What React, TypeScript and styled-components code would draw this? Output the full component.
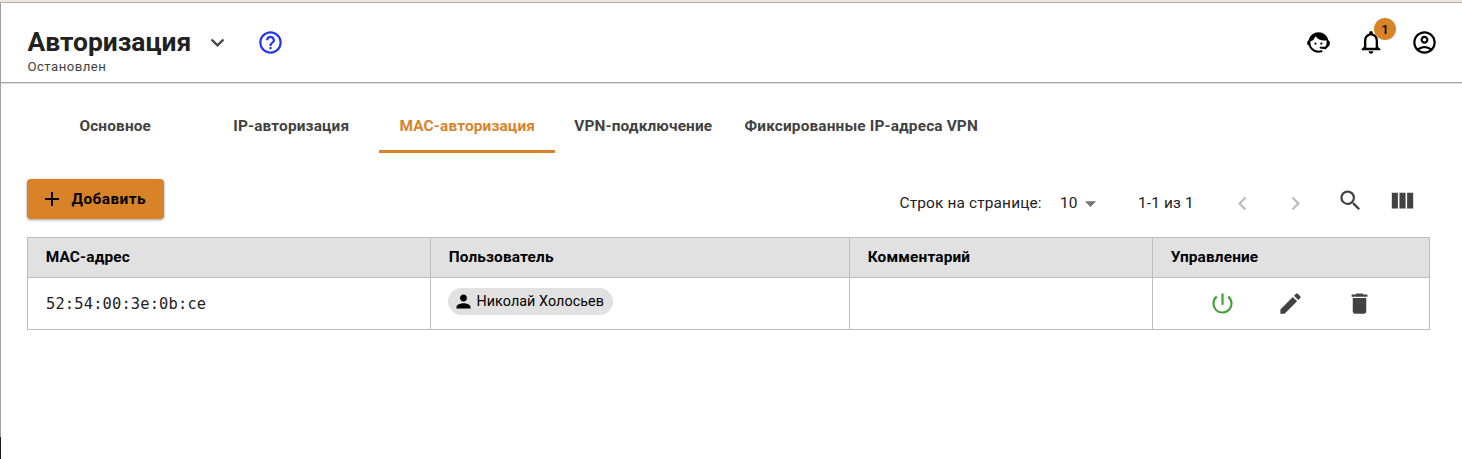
import React from "react";
import styled, { createGlobalStyle } from "styled-components";

const Global = createGlobalStyle`
  *, *::before, *::after { box-sizing: border-box; }
  body { margin: 0; background: #fff; font-family: Roboto, sans-serif; color: #212121; overflow: hidden; }
  button { font: inherit; border: 0; padding: 0; background: none; color: inherit; }
`;

const Page = styled.div`
  height: 459px;
  display: grid;
  grid-template-columns: 1px 1fr;
  grid-template-rows: 2px 1fr;
`;
const TopStrip = styled.div`
  grid-column: 1 / 3;
  background: #f3e2dc;
`;
const LeftEdge = styled.div`
  background: linear-gradient(#a3a3a3 435px, #1a1a1a 435px);
`;
const Main = styled.div`
  border-top: 1px solid #b9b0ad;
  min-width: 0;
`;

const Header = styled.header`
  height: 80px;
  display: flex;
  justify-content: space-between;
  border-bottom: 1px solid #a3a3a3;
  box-shadow: 0 1px 1px rgba(0, 0, 0, 0.12);
  padding: 0 24px 0 26px;
`;
const TitleArea = styled.div`
  display: flex;
`;
const TitleBlock = styled.div`
  padding: 23px 0 0 0.5px;
  width: 164px;
`;
const Title = styled.h1`
  margin: 0;
  font-size: 26.4px;
  line-height: 32px;
  font-weight: 700;
  white-space: nowrap;
`;
const Status = styled.div`
  margin-top: 1px;
  font-size: 13.2px;
  line-height: 16px;
  letter-spacing: 0.44px;
  color: #424242;
`;
const TitleIcons = styled.div`
  display: flex;
  align-items: flex-start;
  padding: 26px 0 0 13px;
  gap: 26px;
  color: #424242;
`;
const HeaderIcons = styled.div`
  display: flex;
  gap: 25px;
  padding-top: 26px;
  color: #000;
`;
const BellWrap = styled.div`
  position: relative;
  width: 28px;
  height: 28px;
  margin: -1px 1px 0 0;
`;
const Badge = styled.span`
  position: absolute;
  left: 17px;
  top: -10px;
  width: 22px;
  height: 22px;
  border-radius: 50%;
  background: #d98328;
  font-size: 13.2px;
  font-weight: 500;
  line-height: 23px;
  text-align: center;
`;

const Tabs = styled.nav`
  display: flex;
  padding: 17px 0 0 26px;
`;
const Tab = styled.button<{ $width: number; $active?: boolean }>`
  width: ${(p) => p.$width}px;
  height: 53px;
  padding: 2px 0 0 0.5px;
  border-bottom: 3px solid ${(p) => (p.$active ? "#d98328" : "transparent")};
  color: ${(p) => (p.$active ? "#d98328" : "#424242")};
  font-size: 15.4px;
  font-weight: 700;
  letter-spacing: 0.15px;
  white-space: nowrap;
`;

const Toolbar = styled.div`
  display: flex;
  justify-content: space-between;
  padding: 26px 46px 0 26px;
  height: 84px;
`;
const AddButton = styled.button`
  display: flex;
  align-items: center;
  width: 137px;
  height: 40px;
  padding-left: 13px;
  gap: 7.5px;
  border-radius: 4px;
  background: #d98328;
  color: #000;
  font-size: 15.4px;
  font-weight: 700;
  letter-spacing: 0.44px;
  box-shadow: 0 1px 3px rgba(0, 0, 0, 0.4);
`;
const Pager = styled.div`
  display: flex;
  font-size: 15.4px;
  letter-spacing: 0.16px;
  line-height: 20px;
`;
const PagerLabel = styled.span<{ $width: number }>`
  width: ${(p) => p.$width}px;
  padding-top: 14px;
  white-space: nowrap;
`;
const PagerIcon = styled.span<{ $width: number; $top: number; $color: string }>`
  width: ${(p) => p.$width}px;
  padding-top: ${(p) => p.$top}px;
  color: ${(p) => p.$color};
`;

const Table = styled.table`
  width: 1403px;
  margin-left: 26px;
  table-layout: fixed;
  border-collapse: collapse;
  font-size: 15.4px;
`;
const Th = styled.th<{ $width: number }>`
  width: ${(p) => p.$width}px;
  height: 40px;
  padding: 0 17px 2px 17.7px;
  text-align: left;
  background: #e1e1e1;
  border: 1px solid #bdbdbd;
  color: #000;
  font-weight: 700;
  letter-spacing: 0.15px;
`;
const Td = styled.td`
  height: 52px;
  padding: 0 17px 0 18px;
  border: 1px solid #bdbdbd;
`;
const Mac = styled.span`
  font-family: "DejaVu Sans Mono", monospace;
  font-size: 15.4px;
  letter-spacing: 0.16px;
`;
const Chip = styled.span`
  display: flex;
  align-items: center;
  width: 165px;
  height: 27px;
  margin: 0 0 4px -1px;
  padding: 0 0 2px 4.5px;
  gap: 3px;
  border-radius: 14px;
  background: #e1e1e1;
  color: #000;
  font-size: 14.3px;
  letter-spacing: 0.08px;
  white-space: nowrap;
  svg { margin-top: 2px; }
`;
const Actions = styled.div`
  display: flex;
  justify-content: center;
  gap: 41.3px;
  padding: 0 1.5px 0 0;
  color: #424242;
`;

type IconProps = { d: string; size?: number; color?: string };
const Svg = styled.svg`
  display: block;
  flex: none;
`;
const Icon = ({ d, size = 27, color = "currentColor" }: IconProps) => (
  <Svg width={size} height={size} viewBox="0 0 24 24" fill={color}>
    <path d={d} />
  </Svg>
);

const paths = {
  expand: "M7.41 8.59 12 13.17l4.59-4.58L18 10l-6 6-6-6z",
  help: "M11 18h2v-2h-2v2zm1-16C6.48 2 2 6.48 2 12s4.48 10 10 10 10-4.48 10-10S17.52 2 12 2zm0 18c-4.41 0-8-3.59-8-8s3.59-8 8-8 8 3.59 8 8-3.59 8-8 8zm0-14c-2.21 0-4 1.79-4 4h2c0-1.1.9-2 2-2s2 .9 2 2c0 2-3 1.75-3 5h2c0-2.25 3-2.5 3-5 0-2.21-1.79-4-4-4z",
  agent: "M18.72 14.76c.35-.85.54-1.76.54-2.76 0-.72-.11-1.41-.3-2.05-.65.15-1.33.23-2.04.23A9.07 9.07 0 0 1 9.5 6.34a9.21 9.21 0 0 1-4.73 4.88c-.04.25-.04.52-.04.78A7.27 7.27 0 0 0 12 19.27c1.05 0 2.06-.23 2.97-.64.57 1.09.83 1.63.81 1.63-1.64.55-2.91.82-3.78.82-2.42 0-4.73-.95-6.43-2.66a9.03 9.03 0 0 1-2.24-3.69L2 13.7v-2.5l1.09-1.02A9.09 9.09 0 0 1 12 2.92a9.1 9.1 0 0 1 8.89 7.26L22 11.2v2.6l-.5 1.1L18.38 18l-5.3-.6v-1.67h4.83l.81-.97zM9.27 11.9a1 1 0 1 1 0 2 1 1 0 0 1 0-2zm5.3 0a1 1 0 1 1 0 2 1 1 0 0 1 0-2z",
  bell: "M12 22c1.1 0 2-.9 2-2h-4c0 1.1.9 2 2 2zm6-6v-5c0-3.07-1.63-5.64-4.5-6.32V4c0-.83-.67-1.5-1.5-1.5s-1.5.67-1.5 1.5v.68C7.64 5.36 6 7.92 6 11v5l-2 2v1h16v-1l-2-2zm-2 1H8v-6c0-2.48 1.51-4.5 4-4.5s4 2.02 4 4.5v6z",
  account: "M12 2C6.48 2 2 6.48 2 12s4.48 10 10 10 10-4.48 10-10S17.52 2 12 2zM7.35 18.5C8.66 17.56 10.26 17 12 17s3.34.56 4.65 1.5C15.34 19.44 13.74 20 12 20s-3.34-.56-4.65-1.5zm10.79-1.38C16.45 15.8 14.32 15 12 15s-4.45.8-6.14 2.12C4.7 15.73 4 13.95 4 12c0-4.42 3.58-8 8-8s8 3.58 8 8c0 1.95-.7 3.73-1.86 5.12zM12 6c-1.93 0-3.5 1.57-3.5 3.5S10.07 13 12 13s3.5-1.57 3.5-3.5S13.93 6 12 6zm0 5c-.83 0-1.5-.67-1.5-1.5S11.17 8 12 8s1.5.67 1.5 1.5S12.83 11 12 11z",
  plus: "M19 13h-6v6h-2v-6H5v-2h6V5h2v6h6v2z",
  drop: "m7 10 5 5 5-5z",
  left: "M15.41 7.41 14 6l-6 6 6 6 1.41-1.41L10.83 12z",
  right: "M10 6 8.59 7.41 13.17 12l-4.58 4.59L10 18l6-6z",
  search: "M15.5 14h-.79l-.28-.27A6.471 6.471 0 0 0 16 9.5 6.5 6.5 0 1 0 9.5 16c1.61 0 3.09-.59 4.23-1.57l.27.28v.79l5 4.99L20.49 19l-4.99-5zm-6 0C7.01 14 5 11.99 5 9.5S7.01 5 9.5 5 14 7.01 14 9.5 11.99 14 9.5 14z",
  columns: "M2.5 5h5.4v14H2.5zM9.3 5h5.4v14H9.3zM16.1 5h5.4v14h-5.4z",
  person: "M12 12c2.21 0 4-1.79 4-4s-1.79-4-4-4-4 1.79-4 4 1.79 4 4 4zm0 2c-2.67 0-8 1.34-8 4v2h16v-2c0-2.66-5.33-4-8-4z",
  power: "M13 3h-2v10h2V3zm4.83 2.17-1.42 1.42A6.92 6.92 0 0 1 19 12c0 3.87-3.13 7-7 7A6.995 6.995 0 0 1 7.58 6.58L6.17 5.17A8.932 8.932 0 0 0 3 12a9 9 0 0 0 18 0c0-2.74-1.23-5.18-3.17-6.83z",
  edit: "M3 17.25V21h3.75L17.81 9.94l-3.75-3.75L3 17.25zM20.71 7.04a.996.996 0 0 0 0-1.41l-2.34-2.34a.996.996 0 0 0-1.41 0l-1.83 1.83 3.75 3.75 1.83-1.83z",
  trash: "M6 19c0 1.1.9 2 2 2h8c1.1 0 2-.9 2-2V7H6v12zM19 4h-3.5l-1-1h-5l-1 1H5v2h14V4z",
};

export default function App() {
  return (
    <Page>
      <Global />
      <TopStrip />
      <LeftEdge />
      <Main>
        <Header>
          <TitleArea>
            <TitleBlock>
              <Title>Авторизация</Title>
              <Status>Остановлен</Status>
            </TitleBlock>
            <TitleIcons>
              <Icon d={paths.expand} />
              <Icon d={paths.help} color="#2337f0" />
            </TitleIcons>
          </TitleArea>
          <HeaderIcons>
            <Icon d={paths.agent} />
            <BellWrap>
              <Icon d={paths.bell} size={28} />
              <Badge>1</Badge>
            </BellWrap>
            <Icon d={paths.account} />
          </HeaderIcons>
        </Header>
        <Tabs>
          <Tab $width={176}>Основное</Tab>
          <Tab $width={176}>IP-авторизация</Tab>
          <Tab $width={176} $active>MAC-авторизация</Tab>
          <Tab $width={176}>VPN-подключение</Tab>
          <Tab $width={260}>Фиксированные IP-адреса VPN</Tab>
        </Tabs>
        <Toolbar>
          <AddButton>
            <Icon d={paths.plus} size={24} />
            Добавить
          </AddButton>
          <Pager>
            <PagerLabel $width={160.5}>Строк на странице:</PagerLabel>
            <PagerLabel $width={17}>10</PagerLabel>
            <PagerIcon $width={61} $top={11} $color="#757575"><Icon d={paths.drop} /></PagerIcon>
            <PagerLabel $width={91}>1-1 из 1</PagerLabel>
            <PagerIcon $width={53} $top={11} $color="#bdbdbd"><Icon d={paths.left} /></PagerIcon>
            <PagerIcon $width={55} $top={11} $color="#bdbdbd"><Icon d={paths.right} /></PagerIcon>
            <PagerIcon $width={52} $top={8} $color="#424242"><Icon d={paths.search} /></PagerIcon>
            <PagerIcon $width={27} $top={8} $color="#424242"><Icon d={paths.columns} /></PagerIcon>
          </Pager>
        </Toolbar>
        <Table>
          <thead>
            <tr>
              <Th $width={403}>MAC-адрес</Th>
              <Th $width={419}>Пользователь</Th>
              <Th $width={303}>Комментарий</Th>
              <Th $width={277}>Управление</Th>
            </tr>
          </thead>
          <tbody>
            <tr>
              <Td><Mac>52:54:00:3e:0b:ce</Mac></Td>
              <Td>
                <Chip>
                  <Icon d={paths.person} size={21} />
                  Николай Холосьев
                </Chip>
              </Td>
              <Td />
              <Td>
                <Actions>
                  <Icon d={paths.power} color="#43a036" />
                  <Icon d={paths.edit} />
                  <Icon d={paths.trash} />
                </Actions>
              </Td>
            </tr>
          </tbody>
        </Table>
      </Main>
    </Page>
  );
}
